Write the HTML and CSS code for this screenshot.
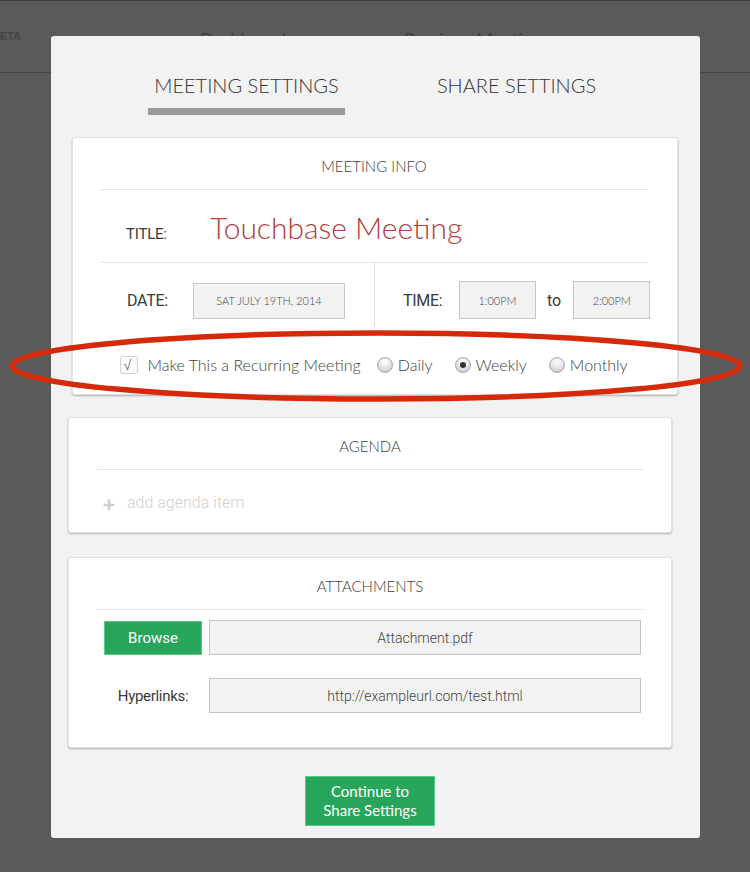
FILE: index.html
```html
<!DOCTYPE html>
<html>
<head>
<meta charset="utf-8">
<link rel="stylesheet" href="styles.css">
</head>
<body>
<header class="topbar">
  <div class="brand"><span>BETA</span></div>
  <nav class="nav">
    <span class="nav-item">Dashboard</span>
    <span class="nav-item">Previous Meetings</span>
  </nav>
</header>

<div class="modal">
  <div class="tabs">
    <div class="tab active">MEETING SETTINGS</div>
    <div class="tab">SHARE SETTINGS</div>
  </div>

  <section class="card card-info">
    <div class="card-head">MEETING INFO</div>
    <div class="title-row">
      <span class="label title-label">TITLE:</span>
      <span class="title-value">Touchbase Meeting</span>
    </div>
    <div class="when-row">
      <div class="when-col date-col">
        <span class="label date-label">DATE:</span>
        <span class="box date-box">SAT JULY 19TH, 2014</span>
      </div>
      <div class="when-col time-col">
        <span class="label time-label">TIME:</span>
        <span class="box time-box">1:00PM</span>
        <span class="label to-label">to</span>
        <span class="box time-box">2:00PM</span>
      </div>
    </div>
    <div class="recur-row">
      <span class="checkbox">&#8730;</span>
      <span class="recur-text">Make This a Recurring Meeting</span>
      <span class="radio-opt"><span class="radio"></span>Daily</span>
      <span class="radio-opt"><span class="radio checked"></span>Weekly</span>
      <span class="radio-opt"><span class="radio"></span>Monthly</span>
    </div>
  </section>

  <section class="card card-side">
    <div class="card-head">AGENDA</div>
    <div class="agenda-item">
      <svg class="plus" width="12" height="12" viewBox="0 0 12 12"><path d="M6 0.5V11.5M0.5 6H11.5" stroke="#cfcfcf" stroke-width="2.6" fill="none"/></svg>
      <span>add agenda item</span>
    </div>
  </section>

  <section class="card card-side card-attach">
    <div class="card-head">ATTACHMENTS</div>
    <div class="attach-grid">
      <span class="btn browse">Browse</span>
      <span class="field">Attachment.pdf</span>
      <span class="label link-label">Hyperlinks:</span>
      <span class="field">http://exampleurl.com/test.html</span>
    </div>
  </section>

  <div class="actions">
    <span class="btn continue">Continue to<br>Share Settings</span>
  </div>
</div>

<svg class="annot" width="750" height="872" viewBox="0 0 750 872">
  <ellipse cx="376" cy="366" rx="364" ry="33" fill="none" stroke="#d52a0a" stroke-width="5.5"/>
</svg>
</body>
</html>
```

FILE: styles.css
```css
* { box-sizing: border-box; }
html, body { margin: 0; padding: 0; }
body {
  width: 750px;
  height: 872px;
  background: #5a5a5a;
  font-family: Lato, "Open Sans", sans-serif;
  overflow: hidden;
  position: relative;
}

.topbar {
  height: 73px;
  border-top: 1px solid #3c3c3c;
  border-bottom: 1px solid #474747;
  display: flex;
  align-items: center;
}
.brand {
  width: 21px;
  overflow: hidden;
  display: flex;
  justify-content: flex-end;
  font: bold 11px "Liberation Sans", sans-serif;
  color: #454545;
  padding-bottom: 1px;
}
.nav {
  display: flex;
  gap: 118px;
  padding-left: 179px;
  padding-top: 4px;
}
.nav-item {
  font-size: 18px;
  color: #3f3f3f;
}

.modal {
  position: absolute;
  left: 51px;
  top: 36px;
  width: 649px;
  height: 802px;
  background: #f2f2f2;
  border-radius: 3px;
  padding-top: 37px;
}

.tabs {
  display: flex;
  gap: 73px;
  padding-left: 97px;
}
.tab {
  width: 197px;
  text-align: center;
  font-size: 20px;
  font-weight: 300;
  line-height: 24px;
  color: #333;
  padding-bottom: 11px;
  border-bottom: 7px solid transparent;
}
.tab.active { border-bottom-color: #999; }

.card {
  background: #fff;
  border: 1px solid #e2e2e2;
  border-radius: 3px;
  box-shadow: 0 1px 2px rgba(0,0,0,0.28);
}
.card-info {
  margin: 22px 22px 0 21px;
  padding: 0 29px 0 27px;
}
.card-side {
  margin: 22px 0 0 17px;
  width: 604px;
  padding: 0 28px;
}
.card-attach { margin-top: 24px; }

.card-head {
  text-align: center;
  font-size: 15px;
  font-weight: 300;
  line-height: 22px;
  color: #3c3c3c;
  padding: 17px 0 12px;
  border-bottom: 1px solid #e3e3e3;
}

.label {
  font-family: Roboto, "Liberation Sans", sans-serif;
  color: #3a3a3a;
}

.title-row {
  display: flex;
  align-items: baseline;
  padding: 19px 0 17px 26px;
  border-bottom: 1px solid #e3e3e3;
}
.title-label {
  width: 84px;
  font-size: 15px;
  letter-spacing: -0.2px;
}
.title-value {
  font-size: 30px;
  font-weight: 300;
  line-height: 36px;
  color: #b23b3b;
}

.when-row {
  display: grid;
  grid-template-columns: 275px 1fr;
}
.when-col {
  display: flex;
  align-items: center;
}
.date-col {
  padding: 19px 0 7px 27px;
  border-right: 1px solid #dcdcdc;
}
.time-col {
  padding: 18px 0 7px 28px;
}
.date-label { width: 66px; font-size: 16px; letter-spacing: -0.3px; }
.time-label { width: 56px; font-size: 16px; letter-spacing: -0.3px; }
.to-label { font-size: 16px; margin: 0 12px 0 11px; }

.box {
  display: flex;
  align-items: center;
  justify-content: center;
  background: #f2f2f2;
  border: 1px solid #c8c8c8;
  font-size: 11px;
  font-weight: 300;
  color: #444;
}
.date-box { width: 152px; height: 36px; }
.time-box { width: 77px; height: 38px; }

.recur-row {
  display: flex;
  align-items: center;
  justify-content: center;
  padding: 30px 0 20px;
  line-height: 18px;
  font-size: 16px;
  font-weight: 300;
  color: #3e3e3e;
}
.checkbox {
  width: 18px;
  height: 18px;
  border: 1px solid #d2d2d2;
  border-radius: 3px;
  background: #fafafa;
  font-family: "DejaVu Sans", sans-serif;
  font-size: 14px;
  line-height: 16px;
  color: #777;
  padding-left: 2px;
  margin-right: 9px;
}
.radio-opt {
  display: flex;
  align-items: center;
  margin-left: 22px;
}
.recur-text + .radio-opt { margin-left: 16px; }
.radio {
  width: 16px;
  height: 16px;
  border-radius: 50%;
  border: 1px solid #a8a8a8;
  background: radial-gradient(circle at 50% 30%, #ffffff 0%, #e6e6e6 45%, #bdbdbd 100%);
  margin-right: 5px;
  display: flex;
  align-items: center;
  justify-content: center;
}
.radio.checked::after {
  content: "";
  width: 6px;
  height: 6px;
  border-radius: 50%;
  background: #333;
}

.agenda-item {
  display: flex;
  align-items: center;
  gap: 12px;
  padding: 23px 0 19px 6px;
  line-height: 20px;
  font-family: Roboto, "Liberation Sans", sans-serif;
  font-weight: 300;
  font-size: 16px;
  color: #cfcfcf;
}
.plus { margin-top: 3px; }

.attach-grid {
  display: grid;
  grid-template-columns: 98px 432px;
  column-gap: 7px;
  row-gap: 23px;
  padding: 10px 0 34px 7px;
  align-items: center;
}
.field {
  height: 35px;
  display: flex;
  align-items: center;
  justify-content: center;
  background: #f2f2f2;
  border: 1px solid #c4c4c4;
  font-family: Roboto, "Liberation Sans", sans-serif;
  font-weight: 300;
  font-size: 14px;
  color: #444;
}
.link-label {
  text-align: center;
  font-size: 15px;
  letter-spacing: -0.3px;
}
.btn {
  background: #27a55b;
  color: #fff;
  display: flex;
  align-items: center;
  justify-content: center;
  text-align: center;
}
.browse {
  height: 34px;
  border: 1px solid #5cc78b;
  font-family: Roboto, "Liberation Sans", sans-serif;
  font-size: 15px;
}

.actions {
  margin: 28px 0 0 17px;
  width: 604px;
  display: flex;
  justify-content: center;
}
.continue {
  width: 130px;
  height: 50px;
  font-size: 15px;
  line-height: 19px;
  border: 1px solid #5cc78b;
}

.annot {
  position: absolute;
  left: 0;
  top: 0;
  pointer-events: none;
}
```
